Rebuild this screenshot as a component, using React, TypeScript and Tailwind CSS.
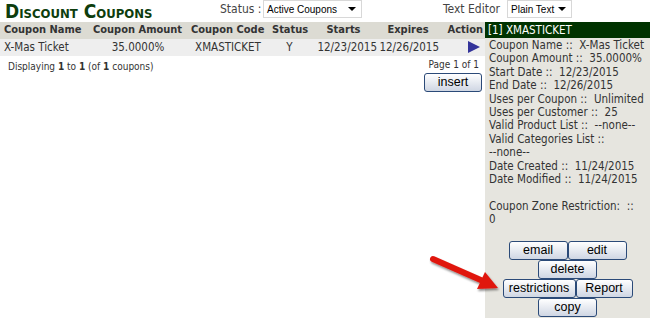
import React from "react";

const font = { fontFamily: '"DejaVu Sans Condensed", "DejaVu Sans", Verdana, sans-serif' };

const details: string[] = [
  "Coupon Name ::  X-Mas Ticket",
  "Coupon Amount ::  35.0000%",
  "Start Date ::  12/23/2015",
  "End Date ::  12/26/2015",
  "Uses per Coupon ::  Unlimited",
  "Uses per Customer ::  25",
  "Valid Product List ::  --none--",
  "Valid Categories List ::",
  "--none--",
  "Date Created ::  11/24/2015",
  "Date Modified ::  11/24/2015",
  "\u00a0",
  "Coupon Zone Restriction:  ::",
  "0",
];

const Btn: React.FC<{ label: string; w: string }> = ({ label, w }) => (
  <button
    className={`${w} h-[19px] rounded-[3px] border border-[#2b4a78] bg-gradient-to-b from-white to-[#cfd6e3] text-[12.5px] leading-none text-black`}
    style={{ fontFamily: '"Liberation Sans", Arial, sans-serif' }}
  >
    {label}
  </button>
);

const Select: React.FC<{ value: string; w: string }> = ({ value, w }) => (
  <div
    className={`${w} h-[18px] flex items-center justify-between border border-[#d8d8d8] bg-white pl-[3px] pr-[5px] text-[10px] text-black whitespace-nowrap`}
    style={{ fontFamily: '"Liberation Sans", Arial, sans-serif' }}
  >
    <span>{value}</span>
    <span className="w-0 h-0 border-l-[4px] border-r-[4px] border-t-[4px] border-l-transparent border-r-transparent border-t-black" />
  </div>
);

export default function App() {
  return (
    <div className="relative w-[650px] h-[324px] bg-white overflow-hidden text-[#333]" style={font}>
      <div className="flex items-start h-[22px]">
        <div
          className="pl-[5px] pt-[1px] text-[19px] leading-[20px] font-bold text-[#0d3d0d] w-[220px] whitespace-nowrap"
          style={{ fontVariant: "small-caps" }}
        >
          Discount Coupons
        </div>
        <div className="flex items-center text-[12px] text-[#444]">
          <span className="w-[43px]">Status :</span>
          <Select value="Active Coupons" w="w-[99px]" />
        </div>
        <div className="flex items-center text-[12px] text-[#444] ml-[81px]">
          <span className="w-[64px]">Text Editor</span>
          <Select value="Plain Text" w="w-[65px]" />
        </div>
      </div>
      <div className="flex">
        <div className="w-[485px]">
          <table className="w-[485px] text-[11.5px] border-collapse table-fixed">
            <colgroup>
              <col className="w-[89px]" />
              <col className="w-[98px]" />
              <col className="w-[82px]" />
              <col className="w-[41px]" />
              <col className="w-[67px]" />
              <col className="w-[62px]" />
              <col className="w-[46px]" />
            </colgroup>
            <thead>
              <tr className="h-[16px] bg-[#dcdbd3] text-[#333] text-[11px] font-bold">
                <td className="pl-[4px] whitespace-nowrap">Coupon Name</td>
                <td className="pl-[4px] whitespace-nowrap">Coupon Amount</td>
                <td className="pl-[4px] whitespace-nowrap">Coupon Code</td>
                <td className="pl-[3px] whitespace-nowrap">Status</td>
                <td className="text-center">Starts</td>
                <td className="text-center">Expires</td>
                <td className="text-right pr-[2px]">Action</td>
              </tr>
            </thead>
            <tbody>
              <tr className="h-[17px] bg-[#eeeeee] text-[#333]">
                <td className="pl-[4px] whitespace-nowrap">X-Mas Ticket</td>
                <td className="text-center">35.0000%</td>
                <td className="text-center">XMASTICKET</td>
                <td className="text-center">Y</td>
                <td className="text-right whitespace-nowrap">12/23/2015</td>
                <td className="text-right whitespace-nowrap">12/26/2015</td>
                <td className="text-right pr-[5px]">
                  <span className="inline-block w-0 h-0 border-t-[6px] border-b-[6px] border-l-[12px] border-t-transparent border-b-transparent border-l-[#33339a] align-middle" />
                </td>
              </tr>
            </tbody>
          </table>
          <div className="flex justify-between text-[10px] text-[#333] mt-[1px]">
            <div className="pl-[8px] pt-[2px]">
              Displaying <b>1</b> to <b>1</b> (of <b>1</b> coupons)
            </div>
            <div className="flex flex-col items-end pr-[3px]">
              <span className="pr-[3px]">Page 1 of 1</span>
              <div className="mt-[1px]">
                <Btn label="insert" w="w-[58px]" />
              </div>
            </div>
          </div>
        </div>
        <div className="w-[165px] h-[296px] bg-[#e6e5df] flex flex-col">
          <div className="h-[16px] bg-[#003300] text-white text-[11.5px] leading-[16px] pl-[3px]">[1] XMASTICKET</div>
          <div className="pl-[4px] pt-[1px] text-[11.5px] leading-[13.4px] text-[#333] whitespace-pre">
            {details.map((d, i) => (
              <div key={i}>{d}</div>
            ))}
          </div>
          <div className="flex flex-col items-center mt-[14px] gap-0">
            <div className="flex">
              <Btn label="email" w="w-[59px]" />
              <Btn label="edit" w="w-[59px]" />
            </div>
            <Btn label="delete" w="w-[59px]" />
            <div className="flex">
              <Btn label="restrictions" w="w-[73px]" />
              <Btn label="Report" w="w-[57px]" />
            </div>
            <Btn label="copy" w="w-[59px]" />
          </div>
        </div>
      </div>
      <svg className="absolute left-[425px] top-[250px]" width="80" height="45" viewBox="0 0 80 45">
        <defs>
          <filter id="sh" x="-20%" y="-20%" width="140%" height="140%">
            <feDropShadow dx="1" dy="2" stdDeviation="1.2" floodColor="#000" floodOpacity="0.45" />
          </filter>
        </defs>
        <g filter="url(#sh)">
          <line x1="8" y1="9" x2="58" y2="31" stroke="#e0160f" strokeWidth="6" strokeLinecap="round" />
          <polygon points="73,38 52,39 60,22" fill="#e0160f" />
        </g>
      </svg>
    </div>
  );
}
